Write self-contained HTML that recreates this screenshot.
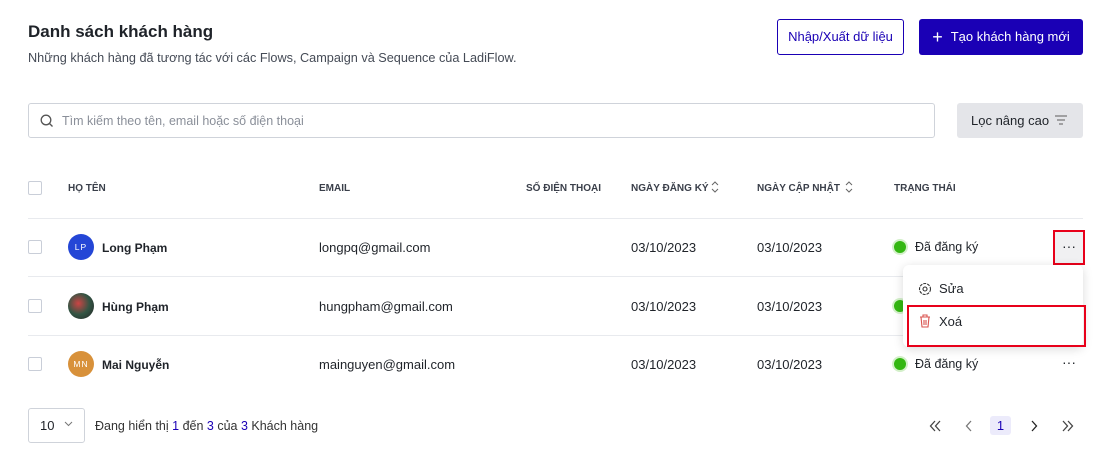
<!DOCTYPE html><html><head><meta charset="utf-8"><style>
*{box-sizing:border-box;margin:0;padding:0}
body{width:1111px;height:475px;background:#fff;font-family:"Liberation Sans",Arial,sans-serif;color:#1f2329;position:relative;overflow:hidden}
.a{position:absolute}
.h{font-size:10px;font-weight:bold;color:#3a3f4a;top:183px}
.cb{width:14px;height:14px;border:1px solid #c9ced8;border-radius:2px;left:28px}
.line{left:28px;width:1055px;height:1px;background:#e8eaee}
.av{left:68px;width:26px;height:26px;border-radius:50%;color:#fff;font-size:8.5px;text-align:center;line-height:26px;letter-spacing:1px}
.nm{left:102px;font-size:12px;font-weight:bold}
.t{font-size:13px}
.dot{left:894px;width:12px;height:12px;border-radius:50%;background:#34b712;box-shadow:0 0 0 2px #d3f0c9;}
</style></head><body>
<div class="a" style="left:28px;top:22px;font-size:17px;font-weight:bold">Danh sách khách hàng</div>
<div class="a" style="left:28px;top:51px;font-size:12.7px;color:#454b56">Những khách hàng đã tương tác với các Flows, Campaign và Sequence của LadiFlow.</div>
<div class="a" style="left:777px;top:19px;width:127px;height:36px;border:1px solid #1a00b5;border-radius:3px;color:#1a00b5;font-size:13px;text-align:center;line-height:34px">Nhập/Xuất dữ liệu</div>
<div class="a" style="left:919px;top:19px;width:164px;height:36px;background:#1a00b5;border-radius:3px;color:#fff;font-size:13px;text-align:center;line-height:36px"><span style="font-size:18px;vertical-align:-2px;margin-right:8px">+</span>Tạo khách hàng mới</div>
<div class="a" style="left:28px;top:103px;width:907px;height:35px;border:1px solid #cfd3da;border-radius:3px"></div>
<svg class="a" style="left:40px;top:114px" width="14" height="14" viewBox="0 0 14 14"><circle cx="6" cy="6" r="4.8" fill="none" stroke="#555" stroke-width="1.3"/><path d="M9.5 9.5l3 3" stroke="#555" stroke-width="1.3"/></svg>
<div class="a" style="left:62px;top:114px;font-size:12.5px;color:#8a8f99">Tìm kiếm theo tên, email hoặc số điện thoại</div>
<div class="a" style="left:957px;top:103px;width:126px;height:35px;background:#e4e5e9;border-radius:3px;font-size:13px;line-height:35px;padding-left:14px">Lọc nâng cao</div>
<svg class="a" style="left:1055px;top:115px" width="12" height="10"><path d="M0 1h12M2 5h8M4 9h4" stroke="#777" stroke-width="1.2"/></svg>
<div class="a cb" style="top:181px"></div>
<div class="a h" style="left:68px">HỌ TÊN</div>
<div class="a h" style="left:319px">EMAIL</div>
<div class="a h" style="left:526px">SỐ ĐIỆN THOẠI</div>
<div class="a h" style="left:631px">NGÀY ĐĂNG KÝ</div>
<div class="a h" style="left:757px">NGÀY CẬP NHẬT</div>
<svg class="a" style="left:711px;top:181px" width="8" height="12"><path d="M1 4l3-3 3 3M1 8l3 3 3-3" fill="none" stroke="#666"/></svg>
<svg class="a" style="left:845px;top:181px" width="8" height="12"><path d="M1 4l3-3 3 3M1 8l3 3 3-3" fill="none" stroke="#666"/></svg>
<div class="a h" style="left:894px">TRẠNG THÁI</div>
<div class="a line" style="top:218px"></div>
<div class="a line" style="top:276px"></div>
<div class="a line" style="top:335px"></div>
<div class="a cb" style="top:240px"></div><div class="a cb" style="top:299px"></div><div class="a cb" style="top:357px"></div>
<div class="a av" style="top:234px;background:#2446d6">LP</div>
<div class="a av" style="top:293px;background:radial-gradient(circle at 40% 40%,#c44 0,#354 50%,#222 100%)"></div>
<div class="a av" style="top:351px;background:#d8913a">MN</div>
<div class="a nm" style="top:241px">Long Phạm</div>
<div class="a nm" style="top:300px">Hùng Phạm</div>
<div class="a nm" style="top:358px">Mai Nguyễn</div>
<div class="a t" style="left:319px;top:240px">longpq@gmail.com</div>
<div class="a t" style="left:319px;top:299px">hungpham@gmail.com</div>
<div class="a t" style="left:319px;top:357px">mainguyen@gmail.com</div>
<div class="a t" style="left:631px;top:240px">03/10/2023</div><div class="a t" style="left:757px;top:240px">03/10/2023</div>
<div class="a t" style="left:631px;top:299px">03/10/2023</div><div class="a t" style="left:757px;top:299px">03/10/2023</div>
<div class="a t" style="left:631px;top:357px">03/10/2023</div><div class="a t" style="left:757px;top:357px">03/10/2023</div>
<div class="a dot" style="top:241px"></div><div class="a t" style="left:915px;top:240px;font-size:12.5px">Đã đăng ký</div>
<div class="a dot" style="top:300px"></div>
<div class="a dot" style="top:358px"></div><div class="a t" style="left:915px;top:357px;font-size:12.5px">Đã đăng ký</div>
<div class="a" style="left:1053px;top:230px;width:32px;height:35px;border:2px solid #e8001a;background:#f0f0f2;text-align:center;line-height:28px;font-size:14px">···</div>
<div class="a" style="left:1053px;top:354px;width:32px;text-align:center;font-size:14px">···</div>
<div class="a" style="left:903px;top:265px;width:180px;height:82px;background:#fff;border-radius:6px;box-shadow:0 2px 10px rgba(0,0,0,.15)"></div>
<svg class="a" style="left:918px;top:282px" width="14" height="14" viewBox="0 0 14 14"><circle cx="7" cy="7" r="5.5" fill="none" stroke="#333" stroke-width="1.1" stroke-dasharray="3 1"/><circle cx="7" cy="7" r="2" fill="none" stroke="#333" stroke-width="1.1"/></svg>
<div class="a t" style="left:939px;top:281px">Sửa</div>
<div class="a" style="left:907px;top:305px;width:179px;height:42px;border:2px solid #e8001a"></div>
<svg class="a" style="left:919px;top:314px" width="12" height="14" viewBox="0 0 12 14"><path d="M1 3h10M4 3V1h4v2M2 3l1 10h6l1-10M5 6v5M7 6v5" fill="none" stroke="#d9534f" stroke-width="1.1"/></svg>
<div class="a t" style="left:939px;top:314px">Xoá</div>
<div class="a" style="left:28px;top:408px;width:57px;height:35px;border:1px solid #cfd3da;border-radius:3px;font-size:13px;line-height:33px;padding-left:11px">10</div>
<svg class="a" style="left:64px;top:421px" width="9" height="6"><path d="M1 1l3.5 3.5L8 1" fill="none" stroke="#777"/></svg>
<div class="a" style="left:95px;top:419px;font-size:12.5px;color:#333">Đang hiển thị <span style="color:#1a00b5">1</span> đến <span style="color:#1a00b5">3</span> của <span style="color:#1a00b5">3</span> Khách hàng</div>
<svg class="a" style="left:929px;top:420px" width="12" height="12"><path d="M6 1L1.5 6 6 11M11 1L6.5 6 11 11" fill="none" stroke="#444" stroke-width="1.3"/></svg>
<svg class="a" style="left:965px;top:420px" width="8" height="12"><path d="M6 1L1.5 6 6 11" fill="none" stroke="#777" stroke-width="1.3"/></svg>
<div class="a" style="left:990px;top:416px;width:21px;height:19px;background:#ecebfb;border-radius:3px;color:#1a00b5;font-size:13px;text-align:center;line-height:19px">1</div>
<svg class="a" style="left:1030px;top:420px" width="8" height="12"><path d="M2 1l4.5 5L2 11" fill="none" stroke="#222" stroke-width="1.3"/></svg>
<svg class="a" style="left:1062px;top:420px" width="12" height="12"><path d="M1 1l4.5 5L1 11M6 1l4.5 5L6 11" fill="none" stroke="#444" stroke-width="1.3"/></svg>
</body></html>
